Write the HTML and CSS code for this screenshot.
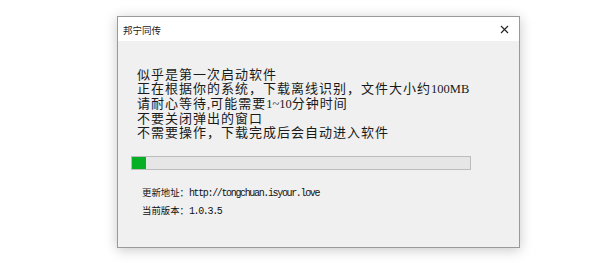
FILE: index.html
```html
<!DOCTYPE html>
<html lang="zh">
<head>
<meta charset="utf-8">
<link rel="stylesheet" href="styles.css">
</head>
<body>
<div class="window">
  <div class="titlebar">
    <span class="title">邦宁同传</span>
    <svg class="close" width="9" height="9" viewBox="0 0 9 9"><path d="M1 1L8 8M8 1L1 8" stroke="#222" stroke-width="1.1" fill="none"/></svg>
  </div>
  <div class="content">
    <div class="message">
      <div>似乎是第一次启动软件</div>
      <div>正在根据你的系统，下载离线识别，文件大小约<span class="latin">100MB</span></div>
      <div>请耐心等待<span class="latin">,</span>可能需要<span class="latin">1~10</span>分钟时间</div>
      <div>不要关闭弹出的窗口</div>
      <div>不需要操作，下载完成后会自动进入软件</div>
    </div>
    <div class="progress"><div class="fill" style="width:4%"></div></div>
    <div class="info">
      <div>更新地址：<span class="mono">http://tongchuan.isyour.love</span></div>
      <div>当前版本：<span class="mono">1.0.3.5</span></div>
    </div>
  </div>
</div>
</body>
</html>
```
FILE: styles.css
```css
html, body {
  margin: 0;
  padding: 0;
  background: #fff;
}
body {
  width: 600px;
  height: 263px;
  overflow: hidden;
}
.window {
  margin: 16px 0 0 117px;
  width: 401px;
  height: 230px;
  border: 1px solid #999;
  box-shadow: 0 2px 12px rgba(0,0,0,0.22);
  background: #f0f0f0;
  display: flex;
  flex-direction: column;
}
.titlebar {
  height: 24px;
  background: #fff;
  display: flex;
  align-items: center;
  justify-content: space-between;
  padding: 0 10px 0 5px;
}
.title {
  font-family: "Noto Sans CJK SC", sans-serif;
  font-size: 9.5px;
  color: #222;
  margin-top: 1px;
}
.close {
  display: block;
  margin-top: 1px;
}
.content {
  flex: 1;
  padding-top: 26px;
}
.message {
  padding-left: 19px;
  font-family: "Noto Sans CJK SC", serif;
  font-size: 13px;
  letter-spacing: 1px;
  line-height: 14px;
  color: #1a1a1a;
}
.latin {
  font-family: "Liberation Serif", serif;
  font-size: 12.5px;
  letter-spacing: 0;
}
.progress {
  margin: 17px 0 0 13px;
  width: 338px;
  height: 12px;
  border: 1px solid #bcbcbc;
  background: #e6e6e6;
}
.fill {
  height: 100%;
  background: #06b025;
}
.info {
  margin-top: 14px;
  padding-left: 24px;
  font-family: "Noto Sans CJK SC", sans-serif;
  font-size: 9.4px;
  line-height: 16px;
  color: #111;
}
.mono {
  font-family: "Liberation Mono", monospace;
  font-size: 10px;
  letter-spacing: -1.35px;
}
```
